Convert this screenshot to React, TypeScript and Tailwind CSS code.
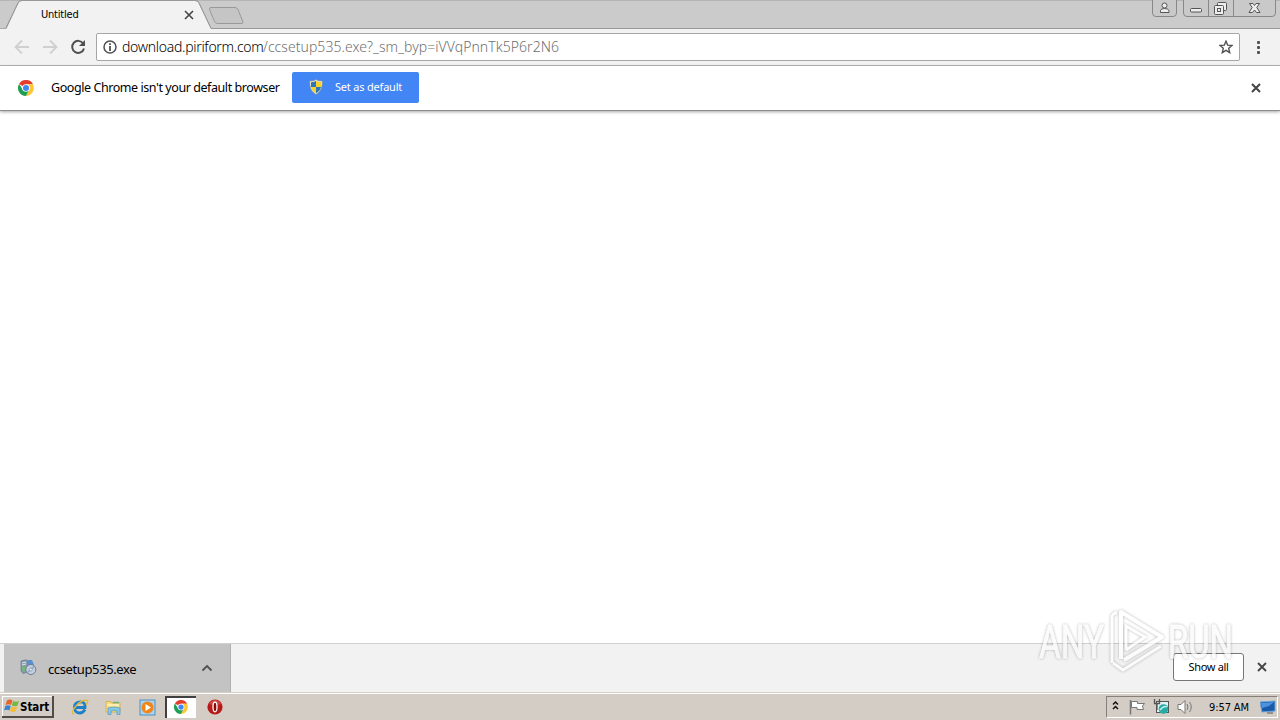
import type { ReactNode } from "react";

function Cross({ className, size = 10, w = 2 }: { className?: string; size?: number; w?: number }) {
  return (
    <svg className={className} width={size} height={size} viewBox="0 0 10 10" stroke="#444" strokeWidth={w} fill="none">
      <path d="M1 1L9 9M9 1L1 9" />
    </svg>
  );
}

function ChromeLogo({ size }: { size: number }) {
  return (
    <svg width={size} height={size} viewBox="0 0 48 48">
      <circle cx="24" cy="24" r="24" fill="#fff" />
      <path d="M24 24L3.2 12A24 24 0 0 1 44.8 12L45 13H24Z" fill="#e33b2e" />
      <path d="M44.8 13A24 24 0 0 1 24 48L33.5 29.5L24 13Z" fill="#fcc934" />
      <path d="M3.2 12A24 24 0 0 0 24 48L33.5 29.5L24 33L14.5 29.5Z" fill="#1e9e50" />
      <circle cx="24" cy="24" r="11.5" fill="#fff" />
      <circle cx="24" cy="24" r="9" fill="#4285f4" />
    </svg>
  );
}

function TabStrip() {
  return (
    <div className="relative flex h-[29px] shrink-0 items-start bg-[#cbcbcb]">
      <svg className="absolute left-0 top-0" width="1280" height="29" fill="none">
        <path d="M0 .5H1280" stroke="#b5b5b5" />
        <path d="M0 28.5H6L18 3Q19 .5 22 .5H195Q198 .5 199 3L211 28.5H1280" stroke="#999" />
        <path d="M6.500 29L18.500 3Q19.500 1 22 1H195Q197.500 1 198.500 3L211 29Z" fill="#f2f2f2" />
        <path d="M0 28L6 28V29H0Z" fill="#aaa" />
        <path d="M6 28L18 3Q19 .5 22 .5H195Q198 .5 199 3L211 28.500" stroke="#999" />
        <path d="M211 7.500H235Q237 7.500 238 9.500L243 22Q243.500 23.500 241 23.500H217.500Q215.500 23.500 214.500 21.500L209.500 9.500Q209 7.500 211 7.500Z" fill="#c5c5c5" stroke="#999" />
        <g stroke="#888" fill="#c9c9c9">
          <path d="M1152.500 0V13Q1152.500 16.500 1156 16.500H1173Q1176.500 16.500 1176.500 13V0" />
          <path d="M1183.500 0V13Q1183.500 16.500 1187 16.500H1272Q1275.500 16.500 1275.500 13V0M1208.500 0V16M1233.500 0V16" />
        </g>
        <g stroke="#555" fill="#eee">
          <circle cx="1164.500" cy="5.500" r="2.500" />
          <path d="M1160.500 12.500V10.500Q1161 8.500 1164.500 8.500T1169 10.500V12.500Z" />
          <rect x="1190.500" y="8.500" width="11" height="3.500" rx="1" />
          <rect x="1217.500" y="2.500" width="9" height="8" rx="1" />
          <rect x="1214.500" y="5.500" width="9" height="9" rx="1" />
          <rect x="1217.500" y="8.500" width="3" height="3" />
          <path d="M1249.500 3.500H1253L1254.500 5.500L1256 3.500H1259.500L1256.800 7.500L1260 12.500H1256.500L1254.500 10L1252.500 12.500H1249L1252.200 7.500Z" />
        </g>
      </svg>
      <span className="relative ml-[41px] mt-[7px] w-[143px] whitespace-nowrap font-['DejaVu_Sans_Condensed','DejaVu_Sans',sans-serif] [font-stretch:condensed] text-[11px] leading-[16px] tracking-[-0.2px] text-black">Untitled</span>
      <Cross className="relative mt-[10px]" size={10} w={1.6} />
    </div>
  );
}

function Toolbar() {
  return (
    <div className="flex h-[37px] shrink-0 items-center border-b border-[#b6b6b6] bg-[#f2f2f2]">
      <svg className="shrink-0" width="96" height="36" fill="none" strokeWidth="1.800">
        <path d="M29 18H16M22 11.500L15.500 18L22 24.500M43 18H56M50 11.500L56.500 18L50 24.500" stroke="#d0d0d0" />
        <path d="M83.200 14.500A6 6 0 1 0 84 19.500" stroke="#505050" strokeWidth="2" />
        <path d="M85 11V17H79Z" fill="#505050" />
      </svg>
      <div className="flex h-[28px] w-[1144px] items-center rounded-[2px] border border-[#a6a6a6] bg-white">
        <svg className="ml-[6px] shrink-0" width="14" height="14" fill="none" stroke="#505050">
          <circle cx="7" cy="7" r="6" strokeWidth="1.500" />
          <path d="M7 6V11M7 3.200V5" strokeWidth="1.800" />
        </svg>
        <div className="ml-[5px] flex flex-1 whitespace-nowrap font-['Noto_Sans',sans-serif] text-[14px] font-light leading-[20px] text-black">
          <span className="w-[141px] tracking-[-0.3px]">download.piriform.com</span>
          <span className="tracking-[0.05px] text-[#707070]">/ccsetup535.exe?_sm_byp=iVVqPnnTk5P6r2N6</span>
        </div>
        <svg className="mr-[6px]" width="14" height="14" viewBox="0 0 14 14" fill="none" stroke="#505050" strokeWidth="1.400">
          <path d="M7 1.200L8.700 5.200L13 5.500L9.700 8.300L10.700 12.600L7 10.300L3.300 12.600L4.300 8.300L1 5.500L5.300 5.200Z" />
        </svg>
      </div>
      <svg className="ml-[16px]" width="6" height="14" fill="#505050">
        <rect x="1" y="1" width="3" height="3" rx="1" /><rect x="1" y="6" width="3" height="3" rx="1" /><rect x="1" y="11" width="3" height="3" rx="1" />
      </svg>
    </div>
  );
}

function Shield() {
  return (
    <svg width="14" height="16" viewBox="0 0 14 16">
      <path d="M7 .5Q9 2.200 13.300 2Q14 11.500 7 15.500Q0 11.500 .7 2Q5 2.200 7 .5Z" fill="#e8e4c8" stroke="#8a8f86" strokeWidth=".5" />
      <path d="M7 2Q4.800 3.200 2 3.200V8H7Z" fill="#2b78b8" />
      <path d="M7 2Q9.200 3.200 12 3.200V8H7Z" fill="#f8d22c" />
      <path d="M2 8Q2.800 12 7 14.300V8Z" fill="#f8d22c" />
      <path d="M12 8Q11.200 12 7 14.300V8Z" fill="#2b78b8" />
    </svg>
  );
}

function InfoBar() {
  return (
    <div className="relative flex h-[45px] shrink-0 items-center border-b border-[#8e8e8e] bg-white pl-[18px] shadow-[0_1px_3px_rgba(0,0,0,0.35)]">
      <ChromeLogo size={16} />
      <span className="ml-[17px] w-[241px] whitespace-nowrap font-['Noto_Sans',sans-serif] text-[12.5px] leading-[18px] tracking-[-0.43px] text-black">Google Chrome isn't your default browser</span>
      <button className="mb-[2px] flex h-[31px] w-[127px] items-center rounded-[2px] bg-[#4285f4] pl-[17px] text-white">
        <Shield />
        <span className="ml-[12px] whitespace-nowrap font-['Noto_Sans',sans-serif] text-[11px] leading-[16px] tracking-[-0.2px]">Set as default</span>
      </button>
      <Cross className="ml-auto mr-[19px]" size={10} w={2} />
    </div>
  );
}

function InstallerIcon() {
  return (
    <svg width="17" height="17" viewBox="0 0 17 17">
      <path d="M1 2L6 .8L8 2.500V13L3 14.500L1 12Z" fill="#8799a8" stroke="#66798a" strokeWidth=".7" />
      <path d="M7 1H12L14 6H7Z" fill="#5a8fd0" />
      <path d="M2 4L6 3M2 6L6 5" stroke="#dce8ee" />
      <path d="M2 8L6 7V12L3 13Z" fill="#6fba72" />
      <circle cx="10.800" cy="10.500" r="5" fill="#c4d0dc" stroke="#6b7998" />
      <path d="M7.500 13.500L14 7.500" stroke="#8fa6c0" strokeWidth="1.500" />
      <circle cx="10.800" cy="10.500" r="1.500" fill="#eef" stroke="#7884b0" strokeWidth=".7" />
    </svg>
  );
}

function DownloadShelf() {
  return (
    <div className="flex h-[49px] shrink-0 items-stretch border-t border-[#d0d0d0] bg-[#f2f2f2] pl-[4px]">
      <div className="flex w-[227px] items-center border-r border-[#b0b0b0] bg-[#c3c3c3] pl-[16px]">
        <div className="mb-[2px]"><InstallerIcon /></div>
        <span className="ml-[11px] mt-[2px] w-[153px] whitespace-nowrap font-['Noto_Sans',sans-serif] text-[13px] leading-[18px] tracking-[-0.38px] text-black">ccsetup535.exe</span>
        <svg width="12" height="8" fill="none" stroke="#505050" strokeWidth="1.800"><path d="M1.500 6.500L6 2L10.500 6.500" /></svg>
      </div>
      <button className="ml-auto mt-[9px] h-[28px] w-[71px] rounded-[3px] border border-[#777] bg-white font-['Noto_Sans',sans-serif] text-[11px] leading-[16px] tracking-[-0.32px] text-black">Show all</button>
      <Cross className="ml-[13px] mr-[13px] mt-[18px]" size={10} w={1.8} />
    </div>
  );
}

function WindowsFlag() {
  return (
    <svg width="16" height="16" viewBox="0 0 16 16">
      <path d="M3 2.500Q6 .5 8.500 2.500L7 7Q4.500 5.500 1.500 7Z" fill="#e6632b" />
      <path d="M9.200 3Q12 4.500 15 3L13.500 7.500Q11 9 7.800 7.300Z" fill="#75b843" />
      <path d="M1.300 8Q4 6.500 6.800 8.200L5.300 12.500Q3 11 0 12.500Z" fill="#3d83cc" />
      <path d="M7.500 8.500Q10.500 10 13.200 8.500L11.700 13Q9 15 6 13Z" fill="#f5bd32" />
    </svg>
  );
}

function Slot({ children, active }: { children: ReactNode; active?: boolean }) {
  return active ? (
    <div className="flex h-[22px] w-[31px] items-center justify-center border-l-2 border-t-2 border-[#404040] bg-white pb-[2px] pr-[2px]">{children}</div>
  ) : (
    <div className="flex h-[22px] w-[18px] items-center justify-center">{children}</div>
  );
}

function Taskbar() {
  return (
    <div className="flex h-[28px] shrink-0 items-start border-t border-[#d4d0c8] bg-[#d4cdc5] shadow-[inset_0_1px_0_#fff]">
      <div className="ml-[2px] mt-[3px] flex h-[22px] w-[52px] items-center border-b-2 border-r-2 border-b-[#504d49] border-r-[#504d49] bg-[#d4cdc5] pl-[2px] shadow-[inset_1px_1px_0_#fff]">
        <WindowsFlag />
        <span className="mt-[2px] font-['DejaVu_Sans_Condensed','DejaVu_Sans',sans-serif] [font-stretch:condensed] text-[11.5px] font-bold leading-[16px] tracking-[-0.05px] text-black">Start</span>
      </div>
      <div className="ml-[17px] mt-[3px] flex">
        <Slot>
          <svg width="18" height="18" viewBox="0 0 18 18" fill="none">
            <path d="M14 11.500Q12 15 8.500 15Q3.500 14.500 3.500 9.500T9 4T14 9.500H5" stroke="#1f80c8" strokeWidth="2.800" />
            <path d="M3 16Q-1 15 5 8T16.500 2.500Q17.500 4 15 7" stroke="#e5b93a" strokeWidth="1.300" />
          </svg>
        </Slot>
        <div className="w-[15px]" />
        <Slot>
          <svg width="17" height="17" viewBox="0 0 17 17">
            <path d="M1 2.500H6L7 4H15V13H1Z" fill="#f3dc86" stroke="#d2ad48" strokeWidth=".8" />
            <path d="M8 3.500H14" stroke="#6fb07c" strokeWidth="1.500" />
            <path d="M2 6H14" stroke="#fff3c0" strokeWidth="1.500" />
            <path d="M3 9Q9 7 15 9V15.500H12V12Q9 10.500 6 12V15.500H3Z" fill="#85c7e7" stroke="#5a9fc5" strokeWidth=".8" />
          </svg>
        </Slot>
        <div className="w-[16px]" />
        <Slot>
          <svg width="17" height="17" viewBox="0 0 17 17">
            <rect x="1" y="1" width="15" height="15" fill="#a9d3ef" stroke="#4d91c7" />
            <circle cx="8.500" cy="8.500" r="6" fill="#f28518" />
            <path d="M6.500 5L12 8.500L6.500 12Z" fill="#fff" />
          </svg>
        </Slot>
        <div className="w-[9px]" />
        <Slot active><ChromeLogo size={14} /></Slot>
        <div className="w-[10px]" />
        <Slot>
          <svg width="16" height="16" viewBox="0 0 16 16">
            <circle cx="8" cy="8" r="7.600" fill="#b81a1a" />
            <path d="M2 5Q8 -3 14 5Q8 7 2 5Z" fill="#df6666" opacity=".6" />
            <ellipse cx="8" cy="8" rx="2" ry="4.800" fill="#8d0808" stroke="#fff" strokeWidth="1.300" />
          </svg>
        </Slot>
      </div>
      <div className="ml-auto mr-[2px] mt-[3px] flex h-[22px] w-[172px] items-center border border-b-white border-l-[#868079] border-r-white border-t-[#868079]">
        <svg className="shrink-0" width="88" height="20" fill="none">
          <path d="M6 7.500L8.500 5L11 7.500M6 12L8.500 9.500L11 12" stroke="#111" strokeWidth="1.500" />
          <path d="M23.500 3V17.500" stroke="#777" strokeWidth="1.500" />
          <path d="M24.500 4.500H30.500V6.500H37.500L35.500 9L36.500 12.500H30V10.500H24.500Z" fill="#fff" stroke="#777" />
          <rect x="49.500" y="4.500" width="12" height="11" fill="#dff3f2" stroke="#555" />
          <circle cx="56.500" cy="12" r="4.800" fill="#28aaa5" />
          <path d="M53 13Q57 8 60 10" stroke="#baf4e9" strokeWidth="1.500" />
          <path d="M47.500 2V6.500H52.500V2M50 6.500V13" stroke="#555" strokeWidth="1.300" />
          <path d="M71 7.500H74L78 3.500V16.500L74 12.500H71Z" fill="#fff" stroke="#777" />
          <path d="M80 7Q82 10 80 13M82.500 5Q86 10 82.500 15" stroke="#777" />
        </svg>
        <span className="ml-[14px] mt-[1px] w-[44px] whitespace-nowrap font-['DejaVu_Sans_Condensed','DejaVu_Sans',sans-serif] [font-stretch:condensed] text-[11px] leading-[16px] tracking-[-0.1px] text-black">9:57 AM</span>
        <svg className="ml-[7px] shrink-0" width="16" height="16">
          <path d="M0 3L15 2V12L2 13Z" fill="#1959aa" stroke="#6ba4d6" />
          <path d="M1 4L14 3L9 7L2 9Z" fill="#4d92df" />
          <path d="M7 14H13" stroke="#555" />
        </svg>
      </div>
    </div>
  );
}

function Watermark() {
  return (
    <svg className="pointer-events-none absolute left-[1030px] top-[600px] drop-shadow-[0_0_1.5px_rgba(0,0,0,0.4)]" width="210" height="80" fill="none" stroke="#fff" opacity=".7">
      <g fontFamily="Roboto, sans-serif" fontSize="47" fontWeight="400" fill="#fafafa" strokeWidth=".8">
        <text x="9" y="58" textLength="65" lengthAdjust="spacingAndGlyphs">ANY</text>
        <text x="138" y="58" textLength="65" lengthAdjust="spacingAndGlyphs">RUN</text>
      </g>
      <path d="M91 59V12L132 37L94 60" strokeWidth="4" strokeLinejoin="round" />
      <path d="M82 15V63M82 15L87 12M83 63L93 70L131 46M96 50V26L115 37L96 50" strokeWidth="3" />
    </svg>
  );
}

export default function App() {
  return (
    <div className="relative flex h-[720px] w-[1280px] flex-col overflow-hidden bg-white">
      <TabStrip />
      <Toolbar />
      <InfoBar />
      <main className="flex-1 bg-white" />
      <DownloadShelf />
      <Taskbar />
      <Watermark />
    </div>
  );
}
